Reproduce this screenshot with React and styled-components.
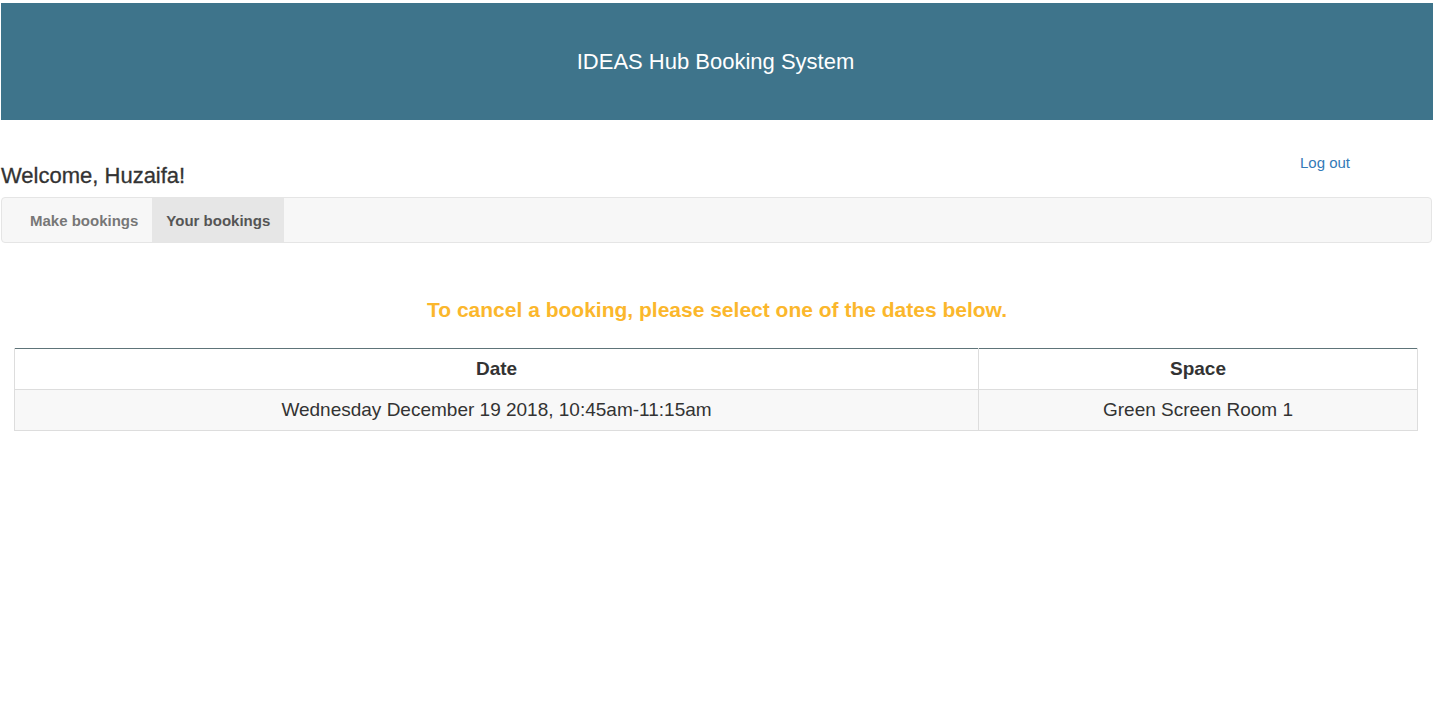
import React from "react";
import styled, { createGlobalStyle } from "styled-components";

const Global = createGlobalStyle`
  html, body { margin: 0; padding: 0; background: #fff; }
  body {
    font-family: "Liberation Sans", Arial, sans-serif;
    color: #333;
    font-size: 14px;
  }
`;

const Page = styled.div`
  padding: 3px 0 0 1px;
`;

const Header = styled.header`
  height: 117px;
  background: #3e748b;
  display: flex;
  align-items: center;
  justify-content: center;
`;

const Title = styled.h1`
  margin: 0;
  color: #fff;
  font-size: 22px;
  font-weight: normal;
  padding-right: 3px;
`;

const TopRow = styled.div`
  display: flex;
  justify-content: space-between;
  align-items: flex-start;
  margin-top: 34px;
  height: 43px;
`;

const Welcome = styled.h2`
  margin: 10px 0 0 0;
  font-size: 22px;
  font-weight: normal;
  color: #333;
  line-height: 24px;
  -webkit-text-stroke: 0.3px #333;
`;

const LogOut = styled.a`
  color: #337ab7;
  font-size: 15px;
  text-decoration: none;
  margin-right: 83px;
  line-height: 18px;
  cursor: pointer;
`;

const NavBar = styled.nav`
  height: 44px;
  margin-right: 1px;
  background: #f7f7f7;
  border: 1px solid #e5e5e5;
  border-radius: 4px;
  display: flex;
  padding-left: 14px;
`;

const Tab = styled.a`
  display: flex;
  align-items: center;
  padding: 0 14px;
  font-size: 15px;
  font-weight: bold;
  color: ${(p) => (p.$active ? "#555" : "#777")};
  background: ${(p) => (p.$active ? "#e6e6e6" : "transparent")};
  text-decoration: none;
  cursor: pointer;
`;

const Notice = styled.h3`
  margin: 55px 0 0 0;
  text-align: center;
  color: #fbb72c;
  font-size: 21px;
  font-weight: bold;
  line-height: 24px;
`;

const TableWrap = styled.div`
  padding: 26px 15px 0 13px;
`;

const Table = styled.table`
  width: 100%;
  border-collapse: collapse;
  border-top: 1px solid #5e7479;
  font-size: 19px;
`;

const Th = styled.th`
  height: 40px;
  padding: 0;
  text-align: center;
  font-weight: bold;
  color: #333;
  border: 1px solid #dddddd;
  border-top: none;
  width: ${(p) => p.$w || "auto"};
`;

const Td = styled.td`
  height: 40px;
  padding: 0;
  text-align: center;
  color: #333;
  border: 1px solid #dddddd;
`;

const Row = styled.tr`
  background: ${(p) => (p.$striped ? "#f8f8f8" : "#fff")};
`;

export default function App() {
  return (
    <>
      <Global />
      <Page>
        <Header>
          <Title>IDEAS Hub Booking System</Title>
        </Header>
        <TopRow>
          <Welcome>Welcome, Huzaifa!</Welcome>
          <LogOut>Log out</LogOut>
        </TopRow>
        <NavBar>
          <Tab>Make bookings</Tab>
          <Tab $active>Your bookings</Tab>
        </NavBar>
        <Notice>To cancel a booking, please select one of the dates below.</Notice>
        <TableWrap>
          <Table>
            <thead>
              <tr>
                <Th $w="963px">Date</Th>
                <Th>Space</Th>
              </tr>
            </thead>
            <tbody>
              <Row $striped>
                <Td>Wednesday December 19 2018, 10:45am-11:15am</Td>
                <Td>Green Screen Room 1</Td>
              </Row>
            </tbody>
          </Table>
        </TableWrap>
      </Page>
    </>
  );
}
